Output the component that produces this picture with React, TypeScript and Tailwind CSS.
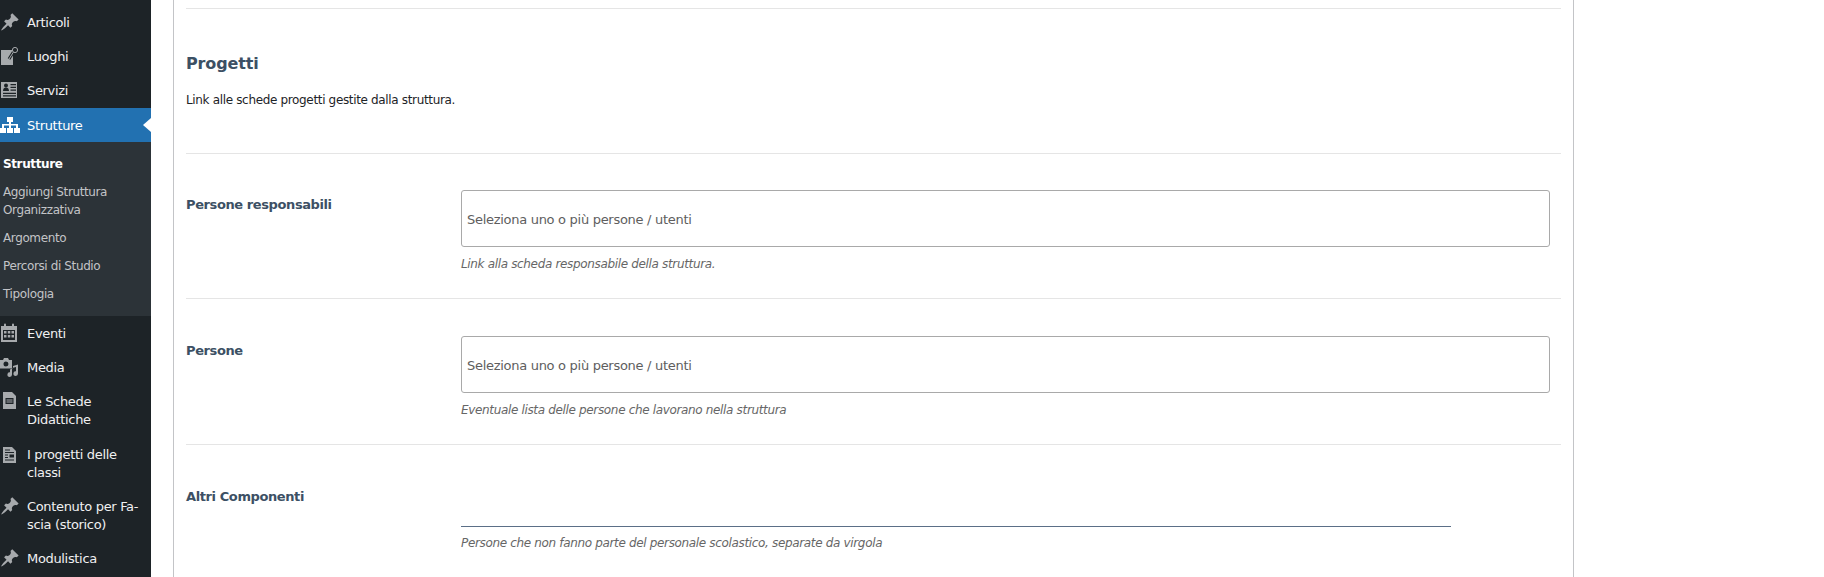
import type { ReactNode } from "react";

const FONT = "font-['DejaVu_Sans',sans-serif]";

function Pin() {
  return (
    <svg viewBox="0 0 20 20" className="w-5 h-5" fill="#a7aaad">
      <path d="M10.44 3.02l1.82-1.82 6.36 6.35-1.83 1.82c-1.05-.68-2.48-.57-3.41.36l-.75.75c-.92.93-1.04 2.35-.35 3.41l-1.83 1.82-2.41-2.41-2.8 2.79c-.42.42-3.38 2.71-3.8 2.29s1.86-3.39 2.28-3.81l2.79-2.79L4.1 9.36l1.83-1.82c1.05.69 2.48.57 3.4-.36l.75-.75c.93-.92 1.05-2.35.36-3.41z" />
    </svg>
  );
}

function Luoghi() {
  return (
    <svg viewBox="0 0 20 20" className="w-5 h-5">
      <path fill="#a7aaad" d="M1 4h12v15H1z" />
      <path stroke="#1d2327" strokeWidth="3" d="M9 13l5-8" />
      <path stroke="#a7aaad" strokeWidth="1" d="M9 13l4.500-7" />
      <circle cx="15" cy="4" r="2.600" fill="#1d2327" stroke="#a7aaad" strokeWidth="1" />
    </svg>
  );
}

function Servizi() {
  return (
    <svg viewBox="0 0 20 20" className="w-5 h-5">
      <path fill="#a7aaad" d="M1 2h16v16H1z" />
      <circle cx="6" cy="5.500" r="2" fill="#1d2327" />
      <path fill="#1d2327" d="M3 11c0-2.500 1.300-3.500 3-3.500s3 1 3 3.500zM10.500 4H16v1.200h-5.500zM10.500 6.800H16V8h-5.500zM10.500 9.600H16v1.200h-5.500zM3 12.800h13V14H3zM3 15.300h13v1.200H3z" />
    </svg>
  );
}

function Network() {
  return (
    <svg viewBox="0 0 20 20" className="w-5 h-5" fill="#fff">
      <path d="M7 2h6v5h-2v2h7v4h2v5h-6v-5h2v-2.500h-5V13h2v5H7v-5h2v-2.500H4V13h2v5H0v-5h2V9h7V7H7z" />
    </svg>
  );
}

function Calendar() {
  return (
    <svg viewBox="0 0 20 20" className="w-5 h-5">
      <path fill="#a7aaad" d="M1 3h3V1.500a1 1 0 0 1 2 0V3h6V1.500a1 1 0 0 1 2 0V3h3v16H1z" />
      <path fill="#1d2327" d="M3 7h12v10H3z" />
      <path fill="#a7aaad" d="M4 8h2.500v2.500H4zM7.800 8h2.500v2.500H7.800zM11.500 8H14v2.500h-2.500zM4 12h2.500v2.500H4zM7.800 12h2.500v2.500H7.800zM11.500 12H14v2.500h-2.500z" />
    </svg>
  );
}

function MediaIcon() {
  return (
    <svg viewBox="0 0 20 20" className="w-5 h-5" fill="#a7aaad">
      <path fillRule="evenodd" d="M0 3h3l1-2h4l1 2h3v8.500H0zm6 1.500a2.500 2.500 0 1 0 0 5 2.500 2.500 0 0 0 0-5z" />
      <path d="M18 7.500v9a2.300 2.300 0 1 1-2-2.200V10l-4 1v6.500a2.300 2.300 0 1 1-2-2.200V12.500l3-1.500V9z" />
    </svg>
  );
}

function Scheda() {
  return (
    <svg viewBox="0 0 20 20" className="w-5 h-5">
      <path fill="#a7aaad" d="M3 1h9l4 4v13H3z" />
      <path fill="#1d2327" d="M5.500 7h8v6h-8z" />
      <path fill="#a7aaad" d="M6.500 8.500h6v1h-6zM6.500 10.500h6v1h-6zM8 14.500h3v1H8z" />
    </svg>
  );
}

function Pagina() {
  return (
    <svg viewBox="0 0 20 20" className="w-5 h-5">
      <path fill="#a7aaad" d="M3 3h9l4 4v12H3z" />
      <path fill="#1d2327" d="M5 5.500h5v1H5zM5 8h9v1H5zM5 10.500h3v1H5zM9.500 10.500H14v3H9.500zM5 13h3v1H5zM5 15.500h9v1H5z" />
    </svg>
  );
}

type MenuItem = { label: string; icon: ReactNode; h: string };

const before: MenuItem[] = [
  { label: "Articoli", icon: <Pin />, h: "h-[34px]" },
  { label: "Luoghi", icon: <Luoghi />, h: "h-[34px]" },
  { label: "Servizi", icon: <Servizi />, h: "h-[35px]" },
];

const after: MenuItem[] = [
  { label: "Eventi", icon: <Calendar />, h: "h-[34px]" },
  { label: "Media", icon: <MediaIcon />, h: "h-[34px]" },
  { label: "Le Schede\nDidattiche", icon: <Scheda />, h: "h-[53px]" },
  { label: "I progetti delle\nclassi", icon: <Pagina />, h: "h-[52px]" },
  { label: "Contenuto per Fa-\nscia (storico)", icon: <Pin />, h: "h-[52px]" },
  { label: "Modulistica", icon: <Pin />, h: "h-[34px]" },
];

function SideRow({ item }: { item: MenuItem }) {
  return (
    <div className={`flex items-start ${item.h} text-[#f0f0f1]`}>
      <div className="w-[27px] pt-[7px] shrink-0">{item.icon}</div>
      <div className="pt-[9px] text-[13px] leading-[18px] tracking-[-0.33px] whitespace-pre-line">{item.label}</div>
    </div>
  );
}

const subItems = ["Aggiungi Struttura\nOrganizzativa", "Argomento", "Percorsi di Studio", "Tipologia"];

function Field({ label, hint, children, h, top }: { label: string; hint: string; children: ReactNode; h: string; top: string }) {
  return (
    <div className={`flex ${h} border-b border-[#e5e5e5]`}>
      <div className={`w-[275px] shrink-0 ${top} text-[13px] leading-[18px] font-bold tracking-[-0.4px] text-[#3c5064]`}>{label}</div>
      <div className="flex-1 pr-[11px]">
        {children}
        <p className="mt-[9px] text-[12px] leading-4 italic tracking-[-0.34px] text-[#666]">{hint}</p>
      </div>
    </div>
  );
}

function SelectBox({ top }: { top: string }) {
  return (
    <div className={`h-[57px] flex items-center px-[5px] pt-[2px] ${top} border border-[#a9a9a9] rounded-[3px] text-[13px] tracking-[-0.29px] text-[#5e5e5e]`}>
      Seleziona uno o più persone / utenti
    </div>
  );
}

export default function App() {
  return (
    <div className={`flex w-[1824px] h-[577px] overflow-hidden bg-white ${FONT}`}>
      <aside className="w-[151px] shrink-0 bg-[#1d2327] pt-[5px]">
        {before.map((i) => (
          <SideRow key={i.label} item={i} />
        ))}
        <div className="relative flex items-start h-[34px] bg-[#2271b1] text-white">
          <div className="w-[27px] pt-[7px] shrink-0">
            <Network />
          </div>
          <div className="pt-[9px] text-[13px] leading-[18px] tracking-[-0.33px]">Strutture</div>
          <div className="absolute right-0 top-[10px] border-y-[7px] border-y-transparent border-r-[8px] border-r-white" />
        </div>
        <div className="bg-[#2c3338] h-[174px] pl-[3px] pt-[13px] text-[12px] leading-[18px] tracking-[-0.38px] text-[#c3c4c7]">
          <div className="font-bold text-white mb-[10px]">Strutture</div>
          {subItems.map((s) => (
            <div key={s} className="mb-[10px] whitespace-pre-line">
              {s}
            </div>
          ))}
        </div>
        {after.map((i) => (
          <SideRow key={i.label} item={i} />
        ))}
      </aside>
      <main className="w-[1401px] ml-[22px] h-full border-x border-[#c3c4c7] px-3">
        <div className="h-[9px] border-b border-[#e5e5e5]" />
        <section className="h-[145px] border-b border-[#e5e5e5] pt-[43px]">
          <h2 className="text-[16px] leading-6 font-bold tracking-[-0.15px] text-[#3c5064]">Progetti</h2>
          <p className="mt-[16px] text-[12px] leading-4 tracking-[-0.34px] text-[#1d2327]">Link alle schede progetti gestite dalla struttura.</p>
        </section>
        <Field h="h-[145px]" top="pt-[42px]" label="Persone responsabili" hint="Link alla scheda responsabile della struttura.">
          <SelectBox top="mt-[36px]" />
        </Field>
        <Field h="h-[146px]" top="pt-[43px]" label="Persone" hint="Eventuale lista delle persone che lavorano nella struttura">
          <SelectBox top="mt-[37px]" />
        </Field>
        <div className="flex">
          <div className="w-[275px] shrink-0 pt-[43px] text-[13px] leading-[18px] font-bold tracking-[-0.4px] text-[#3c5064]">Altri Componenti</div>
          <div className="pt-[36px]">
            <div className="w-[990px] h-[46px] border-b border-[#5b6f87]" />
            <p className="mt-[8px] text-[12px] leading-4 italic tracking-[-0.34px] text-[#666]">
              Persone che non fanno parte del personale scolastico, separate da virgola
            </p>
          </div>
        </div>
      </main>
    </div>
  );
}
